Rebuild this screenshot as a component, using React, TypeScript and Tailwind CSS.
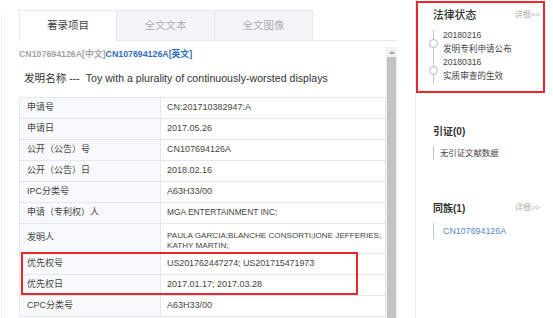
import React from "react";

const rows: { label: string; value: React.ReactNode; tall?: boolean; vcls?: string }[] = [
  { label: "申请号", value: "CN:201710382947:A" },
  { label: "申请日", value: "2017.05.26" },
  { label: "公开（公告）号", value: "CN107694126A" },
  { label: "公开（公告）日", value: "2018.02.16" },
  { label: "IPC分类号", value: "A63H33/00" },
  { label: "申请（专利权）人", value: "MGA ENTERTAINMENT INC;", vcls: "text-[8.4px]" },
  {
    label: "发明人",
    value: (
      <>
        PAULA GARCIA;BLANCHE CONSORTI;IONE JEFFERIES;
        <br />
        KATHY MARTIN;
      </>
    ),
    tall: true,
    vcls: "text-[8.1px]",
  },
  { label: "优先权号", value: "US201762447274; US201715471973", vcls: "tracking-[-0.1px]" },
  { label: "优先权日", value: "2017.01.17; 2017.03.28" },
  { label: "CPC分类号", value: "A63H33/00" },
];

export default function App() {
  return (
    <div className="w-[553px] h-[318px] overflow-hidden bg-white flex font-['Liberation_Sans','Noto_Sans_CJK_SC',sans-serif] text-[#333]">
      {/* left */}
      <div className="w-[415px] h-full flex shrink-0">
        <div className="w-[19px] pt-[12px] shrink-0">
          <div className="ml-[1px] w-px h-full bg-[#eef0f4]" />
        </div>
        <div className="w-[378px] flex flex-col">
          {/* tabs */}
          <div className="h-[41px] pt-[10px] flex border-b border-[#e8eaf1]">
            <div className="w-[98px] h-[31px] bg-white border-l border-t border-r border-[#e6e9f0] flex items-center justify-center text-[10.5px] text-[#444] -mb-px">
              著录项目
            </div>
            <div className="w-[98px] h-[30px] bg-[#f3f5f9] border-t border-r border-[#e6e9f0] flex items-center justify-center text-[10.5px] text-[#b0b0b0]">
              全文文本
            </div>
            <div className="w-[98px] h-[30px] bg-[#f3f5f9] border-t border-r border-[#e6e9f0] flex items-center justify-center text-[10.5px] text-[#b0b0b0]">
              全文图像
            </div>
          </div>
          {/* body */}
          <div className="flex flex-1">
            <div className="w-[367px] pt-[7px] flex flex-col">
              <div className="h-[12px] leading-[12px] text-[8.8px] font-bold">
                <span className="text-[#a3a3a3]">CN107694126A[中文]</span>
                <span className="text-[#2f6fbf]">CN107694126A[英文]</span>
              </div>
              <div className="mt-[11px] pl-[5px] h-[14px] leading-[14px] text-[10.6px] text-[#333] whitespace-nowrap">
                发明名称 ---&nbsp; Toy with a plurality of continuously-worsted displays
              </div>
              <div className="relative mt-[12px] border-t border-l border-r border-[#e4e7ee] text-[9px] text-[#444]">
                {rows.map((r) => (
                  <div
                    key={r.label}
                    className={`grid grid-cols-[141px_1fr] border-b border-[#e4e7ee] ${r.tall ? "h-[30px]" : "h-[21px]"}`}
                  >
                    <div
                      className={`bg-[#f8f9fb] border-r border-[#e4e7ee] pl-[7px] flex ${r.tall ? "items-start pt-[7px]" : "items-center"}`}
                    >
                      {r.label}
                    </div>
                    <div
                      className={`pl-[6px] flex leading-[9.5px] whitespace-nowrap overflow-hidden ${r.vcls ?? ""} ${r.tall ? "items-start pt-[7px]" : "items-center"}`}
                    >
                      <span>{r.value}</span>
                    </div>
                  </div>
                ))}
                <div className="absolute left-[1px] top-[154px] w-[337px] h-[43px] border-2 border-[#e8262b]" />
              </div>
            </div>
            {/* scrollbar */}
            <div className="w-[11px] mt-[6px] flex flex-col bg-[#f1f1f1]">
              <div className="h-[10px] flex items-center justify-center">
                <div className="w-0 h-0 border-l-[3px] border-r-[3px] border-b-[3px] border-l-transparent border-r-transparent border-b-[#a3a3a3]" />
              </div>
              <div className="flex-1 mx-[1px] bg-[#c3c3c3]" />
            </div>
          </div>
        </div>
      </div>
      {/* right */}
      <div className="flex-1 h-full border-l border-[#eaecf2] flex flex-col">
        <div className="mt-[1px] w-[129px] h-[92px] border-2 border-[#e8262b] pl-[15px] pt-[5px] pr-[3px]">
          <div className="flex items-center justify-between h-[14px]">
            <span className="text-[10.8px] font-medium text-[#333]">法律状态</span>
            <span className="text-[8px] text-[#aaa]">详细&gt;&gt;</span>
          </div>
          <div className="relative mt-[7px] text-[8.6px] text-[#444] leading-[13.5px]">
            <div className="absolute left-0 top-[1px] h-[54px] w-px bg-[#b9c6d8]" />
            <div className="absolute left-[-4px] top-[10px] w-[9px] h-[9px] rounded-full bg-white border border-[#a9b9cf]" />
            <div className="absolute left-[-4px] top-[37px] w-[9px] h-[9px] rounded-full bg-white border border-[#a9b9cf]" />
            <div className="pl-[10px]">
              <div>20180216</div>
              <div>发明专利申请公布</div>
              <div>20180316</div>
              <div>实质审查的生效</div>
            </div>
          </div>
        </div>
        <div className="pl-[17px] pr-[11px] mt-[32px]">
          <div className="h-[14px] leading-[14px] text-[10px] font-bold text-[#333]">引证(0)</div>
          <div className="mt-[7px] border-l border-[#b9c6d8] pl-[6px] h-[14px] leading-[14px] text-[8.4px] text-[#444]">
            无引证文献数据
          </div>
          <div className="mt-[41px] flex items-center justify-between h-[14px]">
            <span className="text-[10px] font-bold text-[#333]">同族(1)</span>
            <span className="text-[8px] text-[#aaa] pr-[2px]">详细&gt;&gt;</span>
          </div>
          <div className="mt-[8px] border-l border-[#b9c6d8] pl-[9px] h-[16px] leading-[16px] text-[8.9px] text-[#4f84c6]">
            CN107694126A
          </div>
        </div>
      </div>
    </div>
  );
}
